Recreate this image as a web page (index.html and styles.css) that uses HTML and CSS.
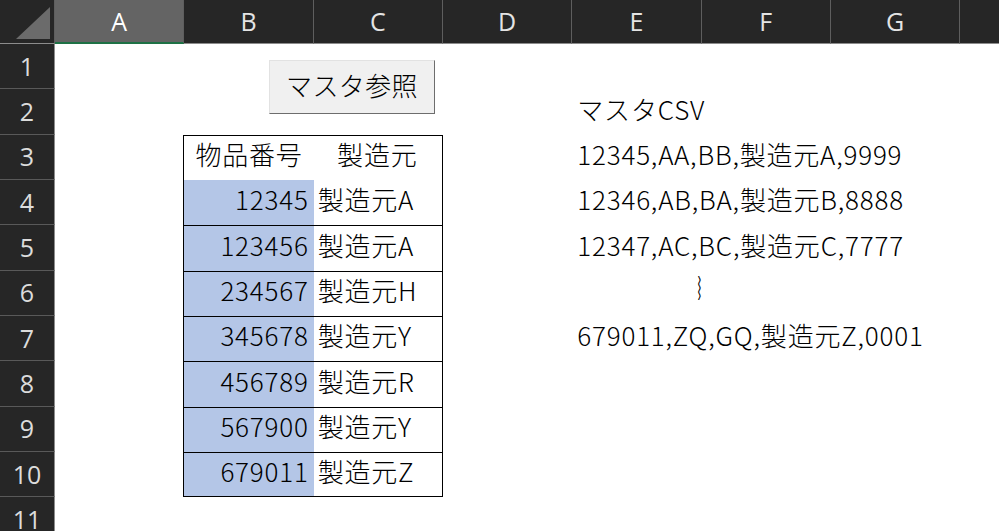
FILE: index.html
```html
<!DOCTYPE html>
<html lang="ja">
<head>
<meta charset="utf-8">
<title>Sheet</title>
<link rel="stylesheet" href="styles.css">
</head>
<body>
<div class="sheet">
  <div class="hdr">
    <div class="corner"><svg width="54" height="43" viewBox="0 0 54 43"><polygon points="16,39 50,39 50,7" fill="#6b6b6b"/></svg></div>
    <div class="ch sel">A</div>
    <div class="ch">B</div>
    <div class="ch">C</div>
    <div class="ch">D</div>
    <div class="ch">E</div>
    <div class="ch">F</div>
    <div class="ch">G</div>
    <div class="ch last"></div>
  </div>

  <div class="row"><div class="rh">1</div></div>
  <div class="row"><div class="rh">2</div><div class="c"></div><div class="c"></div><div class="c"></div><div class="c"></div><div class="c txt">マスタCSV</div></div>
  <div class="row"><div class="rh">3</div><div class="c"></div><div class="c b top center">物品番号</div><div class="c cc top center">製造元</div><div class="c"></div><div class="c txt">12345,AA,BB,製造元A,9999</div></div>
  <div class="row"><div class="rh">4</div><div class="c"></div><div class="c b fill num">12345</div><div class="c cc">製造元A</div><div class="c"></div><div class="c txt">12346,AB,BA,製造元B,8888</div></div>
  <div class="row"><div class="rh">5</div><div class="c"></div><div class="c b fill num top">123456</div><div class="c cc top">製造元A</div><div class="c"></div><div class="c txt">12347,AC,BC,製造元C,7777</div></div>
  <div class="row"><div class="rh">6</div><div class="c"></div><div class="c b fill num top">234567</div><div class="c cc top">製造元H</div><div class="c"></div><div class="c txt"><span class="wave">︴</span></div></div>
  <div class="row"><div class="rh">7</div><div class="c"></div><div class="c b fill num top">345678</div><div class="c cc top">製造元Y</div><div class="c"></div><div class="c txt">679011,ZQ,GQ,製造元Z,0001</div></div>
  <div class="row"><div class="rh">8</div><div class="c"></div><div class="c b fill num top">456789</div><div class="c cc top">製造元R</div></div>
  <div class="row"><div class="rh">9</div><div class="c"></div><div class="c b fill num top">567900</div><div class="c cc top">製造元Y</div></div>
  <div class="row"><div class="rh">10</div><div class="c"></div><div class="c b fill num top bottom">679011</div><div class="c cc top bottom">製造元Z</div></div>
  <div class="row"><div class="rh">11</div></div>

  <button class="btn" type="button">マスタ参照</button>
</div>
</body>
</html>
```

FILE: styles.css
```css
* { box-sizing: border-box; }
html, body { margin: 0; padding: 0; background: #fff; }
body { width: 999px; height: 531px; overflow: hidden; }

.sheet {
  position: relative;
  width: 999px;
  height: 531px;
  overflow: hidden;
  display: flex;
  flex-direction: column;
  background: #fff;
}

.hdr, .row {
  display: grid;
  grid-template-columns: 55px repeat(7, 129.33px) 1fr;
  flex: none;
}

.hdr {
  height: 44px;
  background: #262626;
}

.corner {
  border-right: 1px solid #5e5e5e;
  border-bottom: 1px solid #8c8c8c;
  display: flex;
}

.ch {
  font-family: "Open Sans", "Noto Sans", sans-serif;
  font-size: 25px;
  color: #e4e4e4;
  display: flex;
  align-items: center;
  justify-content: center;
  border-right: 1px solid #5e5e5e;
  border-bottom: 1px solid #8c8c8c;
  padding-bottom: 1px;
}
.ch.last { border-right: none; }
.ch.sel {
  background: #646464;
  color: #ffffff;
  border-bottom: 2px solid #1e7145;
  padding-bottom: 0;
}

.row {
  height: 45.333px;
}

.rh {
  background: #262626;
  color: #dcdcdc;
  font-family: "Open Sans", "Noto Sans", sans-serif;
  font-size: 25px;
  display: flex;
  align-items: center;
  justify-content: center;
  border-right: 1px solid #8c8c8c;
  border-bottom: 1px solid #595959;
  padding-bottom: 1px;
}

.c {
  font-family: "Noto Sans CJK JP", "Noto Sans", sans-serif;
  font-size: 26px;
  font-weight: 300;
  letter-spacing: 0.8px;
  line-height: 30px;
  color: #000;
  display: flex;
  align-items: flex-end;
  padding: 0 5px 11px 5px;
  white-space: nowrap;
  min-width: 0;
}

.txt { overflow: visible; }

.b {
  margin-left: -1px;
  border-left: 1px solid #000;
}
.cc {
  border-right: 1px solid #000;
  padding-left: 4px;
}
.fill { background: #b4c6e7; }
.num { justify-content: flex-end; padding-right: 5px; }
.center { justify-content: center; }
.top { border-top: 1px solid #000; }
.bottom { border-bottom: 1px solid #000; padding-bottom: 10px; }

.wave {
  font-size: 24px;
  padding-left: 120px;
  position: relative;
  top: -3px;
}

.btn {
  position: absolute;
  left: 269px;
  top: 60px;
  width: 166px;
  height: 54px;
  margin: 0;
  padding: 0 0 4px 0;
  background: #f0f0f0;
  border: 1px solid;
  border-color: #e2e2e2 #6d6d6d #6d6d6d #e2e2e2;
  font-family: "Noto Sans CJK JP", "Noto Sans", sans-serif;
  font-size: 26px;
  font-weight: 300;
  line-height: 30px;
  color: #000;
  letter-spacing: 0.4px;
}
```
